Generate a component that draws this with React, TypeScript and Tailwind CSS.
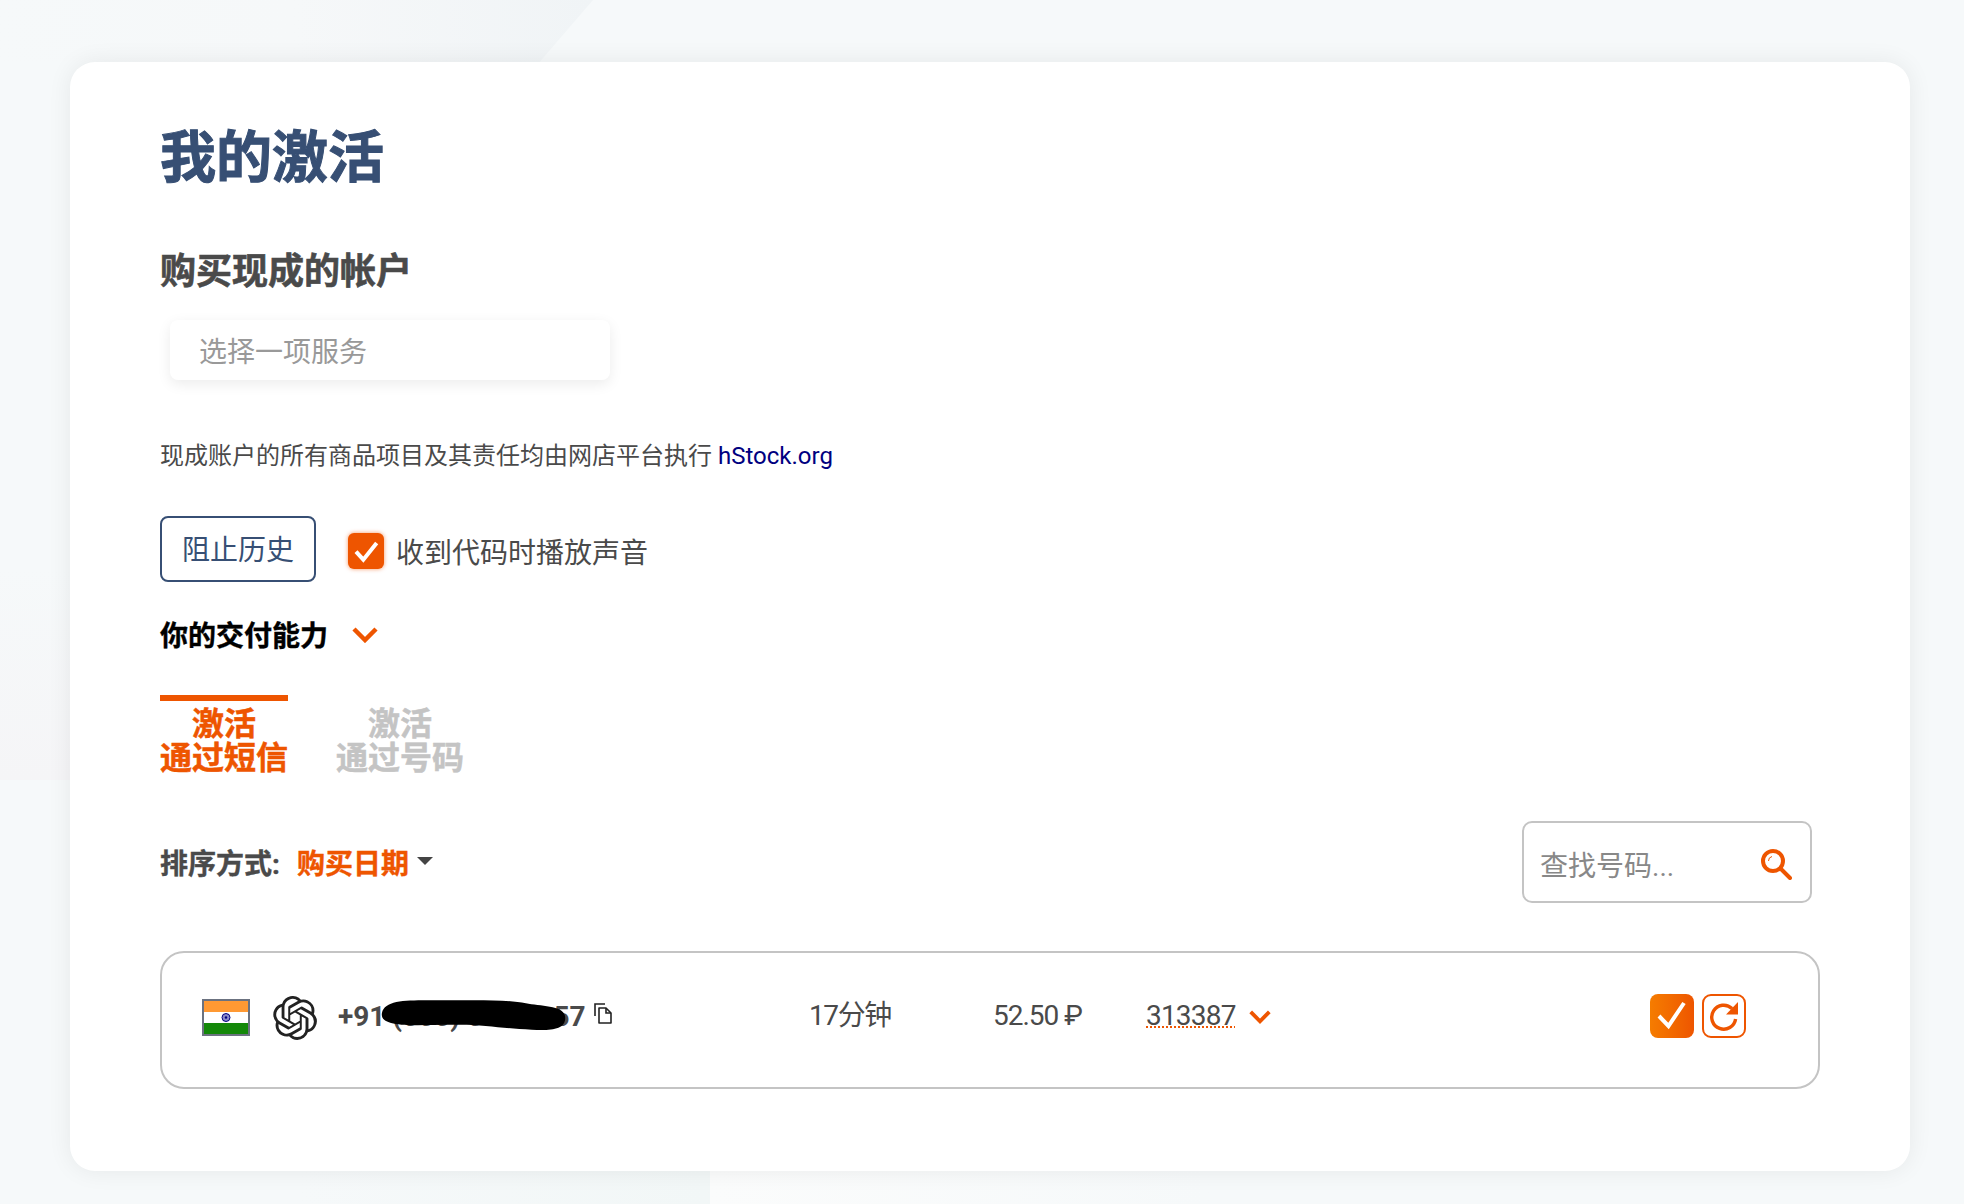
import React from 'react';
import { SiOpenai } from 'react-icons/si';

const ORANGE = '#ee5500';

function Chevron({ className }: { className?: string }) {
  return (
    <svg viewBox="0 0 26 16" className={className} fill="none" stroke={ORANGE} strokeWidth="4.5" strokeLinejoin="miter">
      <path d="M2 2 13 13 24 2" />
    </svg>
  );
}

function SearchIcon() {
  return (
    <svg viewBox="0 0 32 32" className="w-8 h-8 shrink-0" fill="none" stroke={ORANGE}>
      <circle cx="13" cy="13" r="10" strokeWidth="4" />
      <path d="M20.5 20.5 30 30" strokeWidth="4" strokeLinecap="round" />
      <path d="M8.5 13a4.5 4.5 0 0 1 3.5-4.5" strokeWidth="1" />
    </svg>
  );
}

function CopyIcon() {
  return (
    <svg viewBox="0 0 18 21" className="w-[18px] h-[21px] shrink-0" fill="none" stroke="#222" strokeWidth="1.6">
      <path d="M1 13V1h10" />
      <path d="M5 5h7l5 5v10H5z" strokeLinejoin="round" />
      <path d="M12 5v5h5" />
    </svg>
  );
}

function IndiaFlag() {
  return (
    <svg viewBox="0 0 48 37" className="w-12 h-[37px] shrink-0">
      <rect width="48" height="37" fill="#6b7280" />
      <rect x="2" y="2" width="44" height="11" fill="#ff9933" />
      <rect x="2" y="13" width="44" height="11" fill="#ffffff" />
      <rect x="2" y="24" width="44" height="11" fill="#138808" />
      <circle cx="24" cy="18.5" r="4" fill="#8a8ac8" stroke="#000080" strokeWidth="1" />
      <circle cx="24" cy="18.5" r="1.2" fill="#000080" />
    </svg>
  );
}

function RefreshIcon() {
  return (
    <svg viewBox="0 0 44 44" className="w-11 h-11">
      <rect x="1" y="1" width="42" height="42" rx="8" fill="#fff" stroke={ORANGE} strokeWidth="2" />
      <path d="M30 14.5A12 12 0 1 0 33.600 25" fill="none" stroke={ORANGE} strokeWidth="3.4" />
      <path d="M36 8v12.500H24z" fill={ORANGE} />
    </svg>
  );
}

export default function App() {
  return (
    <div className="relative min-h-[1204px] overflow-hidden bg-[#f6f9fa] pt-[62px] pl-[70px] font-['Roboto','Noto_Sans_CJK_SC',sans-serif] text-[#4a4a4a]">
      {/* faint background shapes */}
      <div className="absolute left-0 top-0 w-[593px] h-[62px] bg-gradient-to-r from-[#f6f9fa] via-[#f6f8f9] to-[#f0f4f6] [clip-path:polygon(0_0,100%_0,91%_100%,0_100%)]" />
      <div className="absolute left-0 top-[570px] w-[70px] h-[210px] bg-gradient-to-b from-[#f6f9fa] to-[#f5f5f7]" />
      <div className="absolute left-[300px] top-[1171px] w-[410px] h-[33px] bg-gradient-to-r from-[#f6f9fa] to-[#f2f7f7]" />
      <div className="absolute left-[710px] top-[1171px] w-[500px] h-[33px] bg-gradient-to-r from-[#fbfcfc] to-[#f6f9fa]" />

      <div className="relative w-[1840px] h-[1109px] rounded-[25px] bg-white pl-[90px] pt-[62px] shadow-[0_0_24px_rgba(0,0,0,0.07)]">
        <h1 className="text-[56px] leading-[68px] font-bold text-[#374f74] [-webkit-text-stroke:1px_#374f74]">我的激活</h1>
        <h2 className="mt-[58px] text-[36px] leading-[44px] font-bold [-webkit-text-stroke:0.6px_#4a4a4a]">购买现成的帐户</h2>

        <input
          placeholder="选择一项服务"
          className="mt-[26px] ml-[10px] block w-[440px] h-[60px] rounded-lg bg-white pl-[29px] pt-[5px] text-[28px] shadow-[0_4px_14px_rgba(0,0,0,0.08)] outline-none placeholder:text-[#999999]"
        />

        <p className="mt-[60px] text-[24px] leading-[32px]">
          现成账户的所有商品项目及其责任均由网店平台执行 <a className="text-[#000080]">hStock.org</a>
        </p>

        <div className="mt-[44px] flex items-center">
          <button className="w-[156px] h-[66px] rounded-lg border-2 border-[#374f74] pt-[4px] text-[28px] text-[#374f74]">阻止历史</button>
          <div className="ml-[32px] mt-1 w-9 h-9 rounded-md bg-[#ee5500] shadow-[0_0_4px_rgba(238,85,0,0.6)] flex items-center justify-center">
            <svg viewBox="0 0 24 24" className="w-8 h-8" fill="none" stroke="#fff" strokeWidth="3">
              <path d="M4.500 12.500 10 18.500 20 6" />
            </svg>
          </div>
          <span className="ml-3 pt-[9px] text-[28px]">收到代码时播放声音</span>
        </div>

        <div className="mt-[35px] flex items-center h-9">
          <span className="pt-[3px] text-[28px] font-bold text-black [-webkit-text-stroke:0.4px_#000]">你的交付能力</span>
          <Chevron className="ml-6 w-[26px] h-4" />
        </div>

        <div className="mt-[42px] flex gap-12">
          <div className="w-32 border-t-[6px] border-[#ee5500] pt-[6px] text-center text-[32px] leading-[34px] font-bold text-[#ee5500] [-webkit-text-stroke:0.5px_#ee5500]">
            激活
            <br />
            通过短信
          </div>
          <div className="w-32 border-t-[6px] border-transparent pt-[6px] text-center text-[32px] leading-[34px] font-bold text-[#c4c4c4] [-webkit-text-stroke:0.5px_#c4c4c4]">
            激活
            <br />
            通过号码
          </div>
        </div>

        <div className="mt-[46px] w-[1652px] flex items-center justify-between">
          <div className="flex items-center pt-[6px]">
            <span className="text-[28px] font-bold [-webkit-text-stroke:0.4px_#4a4a4a]">排序方式:</span>
            <span className="ml-[17px] text-[28px] font-bold text-[#ee5500] [-webkit-text-stroke:0.4px_#ee5500]">购买日期</span>
            <span className="ml-2 mb-2 w-0 h-0 border-x-8 border-t-8 border-x-transparent border-t-[#444444]" />
          </div>
          <div className="w-[290px] h-[82px] rounded-[10px] border-2 border-[#c4c4c4] flex items-center pl-4 pr-[18px]">
            <input placeholder="查找号码..." className="min-w-0 flex-1 pt-[10px] text-[28px] outline-none placeholder:text-[#888888]" />
            <div className="pt-[4px]"><SearchIcon /></div>
          </div>
        </div>

        <div className="mt-[48px] w-[1660px] h-[138px] rounded-[24px] border-2 border-[#c4c4c4] flex items-center pl-[40px] pb-[5px]">
          <IndiaFlag />
          <SiOpenai className="ml-[23px] w-[44px] h-[44px] text-[#222222] shrink-0" />
          <div className="relative ml-[21px] mb-[2px] w-[246px] text-[28px] font-bold whitespace-nowrap">
            +91 (000) 00-00-57
            <svg viewBox="0 0 192 34" className="absolute left-[41px] top-[2px] w-[188px] h-[34px]">
              <path d="M3 15C6 1 30 2 60 2c40 0 70-1 90 3 14 3 38 2 40 13 2 14-14 15-34 14-30-1-50-6-82-5C40 27 0 31 3 15z" fill="#000" />
            </svg>
          </div>
          <div className="ml-[10px] -mt-[8px]"><CopyIcon /></div>
          <span className="ml-[197px] mb-[4px] w-[184px] text-[28px] tracking-[-1.4px]">17分钟</span>
          <span className="w-[153px] mb-[4px] text-[28px] tracking-[-1px]">52.50 ₽</span>
          <span className="mb-[4px] text-[28px] leading-[32px] tracking-[-0.8px] underline decoration-dotted decoration-[#ee5500] decoration-2 underline-offset-2">313387</span>
          <Chevron className="ml-[13px] mb-[2px] w-[22px] h-[14px]" />
          <button className="ml-[379px] mb-[4px] w-11 h-11 rounded-lg bg-gradient-to-r from-[#f57c00] to-[#ee5500] flex items-center justify-center">
            <svg viewBox="0 0 44 44" className="w-11 h-11" fill="none" stroke="#fff" strokeWidth="4">
              <path d="M9 22l9.500 10L34 9" />
            </svg>
          </button>
          <button className="ml-2 mb-[4px] w-11 h-11"><RefreshIcon /></button>
        </div>
      </div>
    </div>
  );
}
